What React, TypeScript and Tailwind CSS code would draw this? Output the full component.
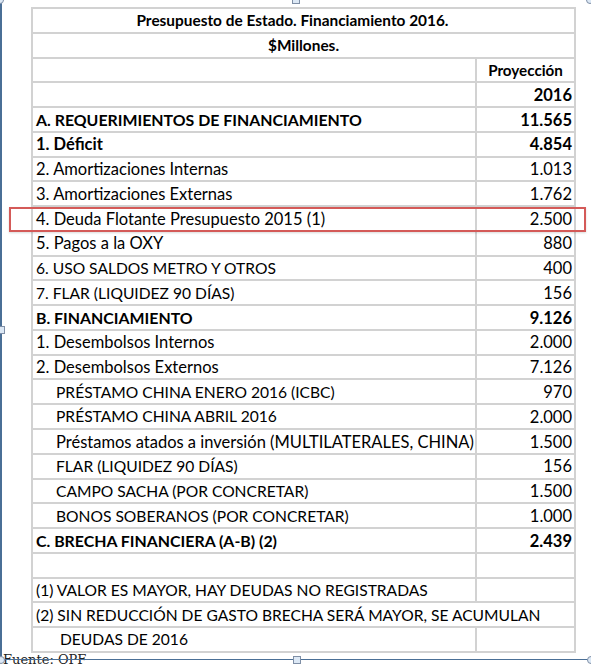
import React from 'react';

type Row = {
  label?: string;
  value?: string;
  kind?: 'section' | 'boldItem' | 'item' | 'sub' | 'note' | 'noteWide' | 'noteCont' | 'empty';
  caps?: boolean;
};

const rows: Row[] = [
  { label: 'A. REQUERIMIENTOS DE FINANCIAMIENTO', value: '11.565', kind: 'section' },
  { label: '1. Déficit', value: '4.854', kind: 'boldItem' },
  { label: '2. Amortizaciones Internas', value: '1.013', kind: 'item' },
  { label: '3. Amortizaciones Externas', value: '1.762', kind: 'item' },
  { label: '4. Deuda Flotante Presupuesto 2015 (1)', value: '2.500', kind: 'item' },
  { label: '5. Pagos a la OXY', value: '880', kind: 'item' },
  { label: '6. USO SALDOS METRO Y OTROS', value: '400', kind: 'item', caps: true },
  { label: '7. FLAR (LIQUIDEZ 90 DÍAS)', value: '156', kind: 'item', caps: true },
  { label: 'B. FINANCIAMIENTO', value: '9.126', kind: 'section' },
  { label: '1. Desembolsos Internos', value: '2.000', kind: 'item' },
  { label: '2. Desembolsos Externos', value: '7.126', kind: 'item' },
  { label: 'PRÉSTAMO CHINA ENERO 2016 (ICBC)', value: '970', kind: 'sub', caps: true },
  { label: 'PRÉSTAMO CHINA ABRIL 2016', value: '2.000', kind: 'sub', caps: true },
  { label: 'Préstamos atados a inversión (MULTILATERALES, CHINA)', value: '1.500', kind: 'sub' },
  { label: 'FLAR (LIQUIDEZ 90 DÍAS)', value: '156', kind: 'sub', caps: true },
  { label: 'CAMPO SACHA (POR CONCRETAR)', value: '1.500', kind: 'sub', caps: true },
  { label: 'BONOS SOBERANOS (POR CONCRETAR)', value: '1.000', kind: 'sub', caps: true },
  { label: 'C. BRECHA FINANCIERA (A-B) (2)', value: '2.439', kind: 'section' },
  { kind: 'empty' },
  { label: '(1) VALOR ES MAYOR, HAY DEUDAS NO REGISTRADAS', kind: 'note', caps: true },
  { label: '(2) SIN REDUCCIÓN DE GASTO BRECHA SERÁ MAYOR, SE ACUMULAN', kind: 'noteWide', caps: true },
  { label: 'DEUDAS DE 2016', kind: 'noteCont', caps: true },
];

function Handle({ round, className }: { round?: boolean; className: string }) {
  return (
    <div
      className={`absolute h-[8px] w-[8px] border border-[#7f8fa6] bg-[#dce8f5] ${round ? 'rounded-full' : ''} ${className}`}
    />
  );
}

export default function App() {
  const rowCls = 'flex h-[24.77px] border-t-2 border-[#d2d2d2]';

  return (
    <div className="relative h-[670px] w-[591px] overflow-hidden bg-white font-['Lato',sans-serif] text-black">
      {/* tabla */}
      <div className="ml-[31px] mt-[7px] w-[545px] border-x-2 border-b-2 border-[#d2d2d2]">
        <div className={`${rowCls} items-center justify-center pr-[22px] pt-[1px] text-[15.4px] font-bold`}>
          Presupuesto de Estado. Financiamiento 2016.
        </div>
        <div className={`${rowCls} items-center justify-center pt-[1px] text-[15.4px] font-bold`}>$Millones.</div>
        <div className={rowCls}>
          <div className="w-[444px] border-r-2 border-[#d2d2d2]" />
          <div className="flex flex-1 items-center justify-center pt-[1px] text-[15.2px] font-bold">Proyección</div>
        </div>
        <div className={rowCls}>
          <div className="w-[444px] border-r-2 border-[#d2d2d2]" />
          <div className="flex flex-1 items-center justify-end pr-[2px] pt-[1px] text-[16.5px] font-bold">2016</div>
        </div>
        {rows.map((r, i) => {
          if (r.kind === 'noteWide') {
            return (
              <div key={i} className={`${rowCls} items-center whitespace-nowrap pl-[3px] pt-[1px] text-[15.6px]`}>
                {r.label}
              </div>
            );
          }
          const bold = r.kind === 'section' || r.kind === 'boldItem';
          const size = r.kind === 'section' ? 'text-[15.9px]' : r.caps ? 'text-[15.6px]' : 'text-[16.5px]';
          const pad = r.kind === 'sub' ? 'pl-[23px]' : r.kind === 'noteCont' ? 'pl-[27px]' : 'pl-[3px]';
          return (
            <div key={i} className={rowCls}>
              <div
                className={`flex w-[444px] items-center whitespace-nowrap border-r-2 border-[#d2d2d2] pt-[1px] ${pad} ${size} ${bold ? 'font-bold' : ''}`}
              >
                {r.label}
              </div>
              <div
                className={`flex flex-1 items-center justify-end pr-[2px] pt-[1px] text-[16.5px] ${bold ? 'font-bold' : ''}`}
              >
                {r.value}
              </div>
            </div>
          );
        })}
      </div>

      <div className="-mt-[1px] pl-[3px] font-['DejaVu_Serif',serif] text-[13px] leading-[16px] text-[#222]">
        Fuente: OPF
      </div>

      {/* recuadro rojo */}
      <div className="absolute left-[9px] top-[207px] h-[25px] w-[577px] border-2 border-solid border-[#d45a58] shadow-[0_1px_2px_rgba(0,0,0,0.15)]" />

      {/* marco de selección */}
      <div className="absolute left-0 top-[3px] h-[658px] w-[2px] bg-[#4a6f96]" />
      <div className="absolute left-0 top-[659px] h-[1px] w-[591px] bg-[#4a6f96]" />
      <Handle round className="-left-[4px] -top-[4px]" />
      <Handle className="left-[292px] -top-[4px]" />
      <Handle round className="left-[586px] -top-[4px]" />
      <Handle className="-left-[3px] top-[326px]" />
      <Handle round className="-left-[3px] top-[656px]" />
      <Handle className="left-[293px] top-[656px]" />
      <Handle round className="left-[587px] top-[656px]" />
    </div>
  );
}
